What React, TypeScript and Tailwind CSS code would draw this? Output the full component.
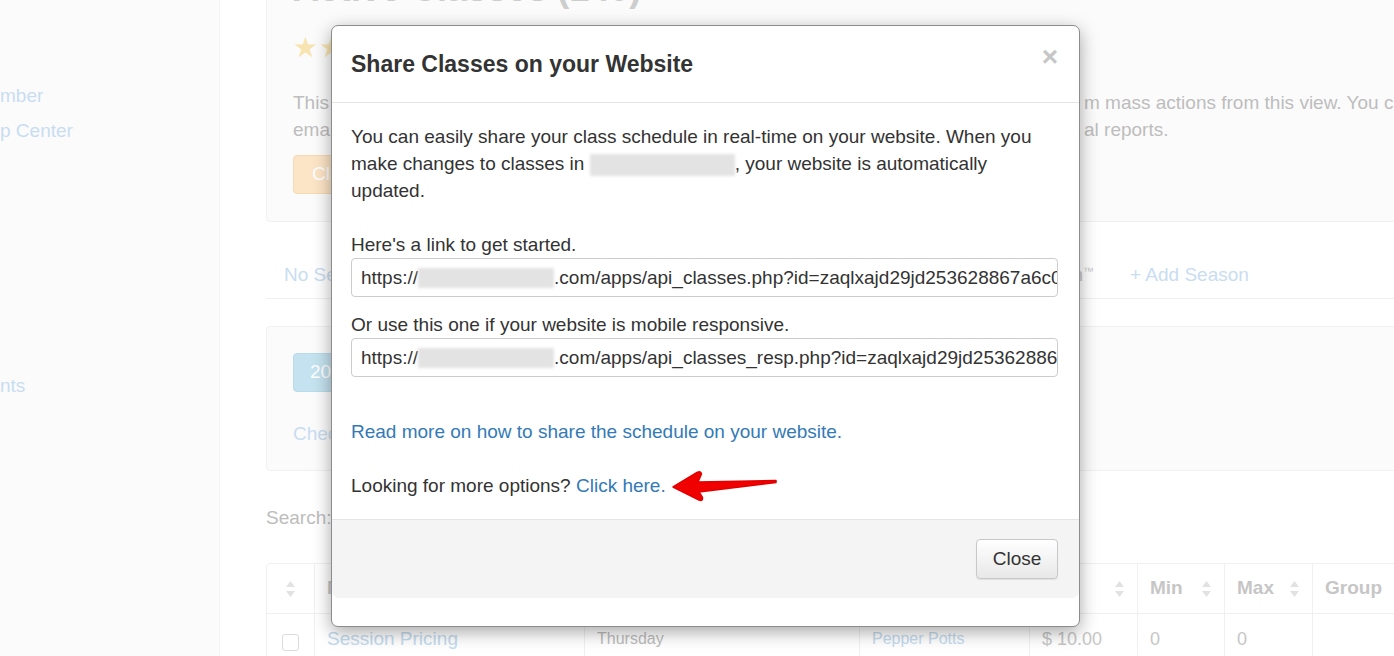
import React from "react";

const font = { fontFamily: '"Liberation Sans", Arial, sans-serif' };

function SortIcon() {
  return (
    <svg width="11" height="18" viewBox="0 0 11 18" className="shrink-0">
      <path d="M5.5 1 L10 7 L1 7 Z" fill="#e2e2e2" />
      <path d="M5.5 17 L10 11 L1 11 Z" fill="#e2e2e2" />
    </svg>
  );
}

function Blurred({ w, h }: { w: string; h: string }) {
  return <span className={`inline-block shrink-0 align-middle bg-[#e3e3e3] blur-[1.5px] ${w} ${h}`} />;
}

function Sidebar() {
  return (
    <div className="w-[220px] shrink-0 bg-[#fbfbfb] border-r border-[#f4f4f4] h-[656px] text-[19px] text-[#c9ddf1]">
      <div className="pt-[82px] leading-[27px]">mber</div>
      <div className="mt-[8px] leading-[27px]">p Center</div>
      <div className="mt-[228px] leading-[27px]">nts</div>
    </div>
  );
}

function TopPanel() {
  return (
    <div className="w-[1180px] -mt-[40px] bg-[#fbfbfb] border border-[#f1f1f1] rounded-[4px] pt-[8px] pb-[27px] px-[26px]">
      <h1 className="text-[36px] leading-[40px] font-bold text-[#cdcdcd]">Active Classes (140)</h1>
      <div className="mt-[24px] h-[30px] flex items-center gap-[1px] text-[28px] text-[#f8e4b0]">
        <span>★</span>
        <span>★</span>
        <span>★</span>
        <span>★</span>
        <span>★</span>
      </div>
      <div className="mt-[26px] text-[19px] leading-[27px] text-[#bdbdbd] whitespace-nowrap">
        <div className="flex">
          <span className="w-[791px] shrink-0 overflow-hidden">This page lists all of your active classes. You can edit, copy, and perfor</span>
          <span>m mass actions from this view. You can also</span>
        </div>
        <div className="flex">
          <span className="w-[791px] shrink-0 overflow-hidden">email your students, print your rosters and export class data into addition</span>
          <span>al reports.</span>
        </div>
      </div>
      <button className="mt-[12px] h-[39px] px-[18px] rounded-[4px] bg-[#fce4c6] border border-[#f7d9b3] text-white text-[19px]">
        Class Actions
      </button>
    </div>
  );
}

function Tabs() {
  return (
    <div className="mt-[30px] w-[1180px] h-[47px] border-b border-[#f0f0f0] flex items-center text-[19px] text-[#c9ddf1]">
      <span className="pl-[18px]">No Season</span>
      <div className="w-[716px] flex justify-end text-[#c8c8c8]">
        <span>
          Fall Session<sup className="text-[11px]">™</sup>
        </span>
      </div>
      <span className="ml-[36px]">+ Add Season</span>
    </div>
  );
}

function SecondPanel() {
  return (
    <div className="mt-[27px] w-[1180px] h-[145px] bg-[#fbfbfb] border border-[#f1f1f1] rounded-[4px] pt-[26px] px-[26px]">
      <button className="h-[39px] px-[16px] rounded-[4px] bg-[#c4e2ef] border border-[#b9dbea] text-white text-[19px]">
        2024 Classes
      </button>
      <div className="mt-[28px] text-[19px] leading-[27px] text-[#c9ddf1]">Check all classes</div>
    </div>
  );
}

function ClassTable() {
  const th = "h-[49px] border-r border-[#f0f0f0] flex items-center px-[12px] text-[19px] font-bold text-[#c6c6c6]";
  const td = "h-[50px] border-r border-[#f0f0f0] flex items-center px-[12px]";
  return (
    <div className="mt-[32px] w-[1180px] border border-[#f0f0f0] rounded-[4px]">
      <div className="flex border-b border-[#f0f0f0]">
        <div className={`${th} w-[48px] justify-center`}>
          <SortIcon />
        </div>
        <div className={`${th} w-[270px] justify-between`}>
          <span>Name</span>
          <SortIcon />
        </div>
        <div className={`${th} w-[275px] justify-between`}>
          <span>Day</span>
          <SortIcon />
        </div>
        <div className={`${th} w-[170px] justify-between`}>
          <span>Instructor</span>
          <SortIcon />
        </div>
        <div className={`${th} w-[108px] justify-between`}>
          <span>Fee</span>
          <SortIcon />
        </div>
        <div className={`${th} w-[87px] justify-between`}>
          <span>Min</span>
          <SortIcon />
        </div>
        <div className={`${th} w-[88px] justify-between`}>
          <span>Max</span>
          <SortIcon />
        </div>
        <div className={`${th} flex-1 border-r-0`}>
          <span>Group</span>
        </div>
      </div>
      <div className="flex">
        <div className={`${td} w-[48px] justify-center`}>
          <span className="w-[17px] h-[17px] mt-[6px] rounded-[3px] border border-[#dcdcdc] bg-white" />
        </div>
        <div className={`${td} w-[270px] text-[19px] text-[#c4dbef]`}>Session Pricing</div>
        <div className={`${td} w-[275px] text-[16px] text-[#bcbcbc]`}>Thursday</div>
        <div className={`${td} w-[170px] text-[16px] text-[#c4dbef]`}>Pepper Potts</div>
        <div className={`${td} w-[108px] text-[18px] text-[#c6c6c6]`}>$ 10.00</div>
        <div className={`${td} w-[87px] text-[18px] text-[#c6c6c6]`}>0</div>
        <div className={`${td} w-[88px] text-[18px] text-[#c6c6c6]`}>0</div>
        <div className={`${td} flex-1 border-r-0`} />
      </div>
    </div>
  );
}

function RedArrow() {
  return (
    <svg width="108" height="36" viewBox="0 0 108 36" className="ml-[5px] -my-[5px] shrink-0">
      <path
        d="M2 19 L26 4.5 Q30 2.5 30.5 6 L27 14 L105 12.5 L105 14.5 L28 24 L31.5 29.5 Q32 33.5 28 32 Z"
        fill="#f10000"
        stroke="#e20000"
        strokeWidth="1.5"
        strokeLinejoin="round"
      />
    </svg>
  );
}

function ShareModal() {
  return (
    <div className="absolute left-[331px] top-[25px] w-[749px] bg-white border border-[#8c8c8c] rounded-[7px] shadow-[0_5px_18px_rgba(0,0,0,0.35)] text-[#333]">
      <div className="relative h-[77px] px-[19px] flex items-center border-b border-[#e5e5e5]">
        <h2 className="text-[23px] font-bold leading-[30px]">Share Classes on your Website</h2>
        <span className="absolute right-[21px] top-[16px] text-[28px] font-bold leading-[30px] text-[#c6c6c6]">×</span>
      </div>
      <div className="pt-[20px] pb-[20px] pl-[19px] pr-[21px] text-[19px] leading-[27px]">
        <p>
          You can easily share your class schedule in real-time on your website. When you make changes to classes in{" "}
          <Blurred w="w-[145px]" h="h-[22px]" />, your website is automatically updated.
        </p>
        <p className="mt-[27px]">Here's a link to get started.</p>
        <div className="h-[39px] border border-[#cccccc] rounded-[4px] px-[9px] flex items-center whitespace-nowrap overflow-hidden">
          <span>https://</span>
          <Blurred w="w-[136px]" h="h-[20px]" />
          <span>.com/apps/api_classes.php?id=zaqlxajd29jd253628867a6c0d41f8e2</span>
        </div>
        <p className="mt-[14px]">Or use this one if your website is mobile responsive.</p>
        <div className="h-[39px] border border-[#cccccc] rounded-[4px] px-[9px] flex items-center whitespace-nowrap overflow-hidden">
          <span>https://</span>
          <Blurred w="w-[136px]" h="h-[20px]" />
          <span>.com/apps/api_classes_resp.php?id=zaqlxajd29jd253628867a6c0d41f8e2</span>
        </div>
        <p className="mt-[41px] text-[#337ab7]">Read more on how to share the schedule on your website.</p>
        <div className="mt-[27px] h-[27px] flex items-center">
          <span>
            Looking for more options? <span className="text-[#337ab7]">Click here.</span>
          </span>
          <RedArrow />
        </div>
      </div>
      <div className="h-[79px] bg-[#f4f4f4] border-t border-[#e5e5e5] rounded-b-[7px] px-[21px] flex items-center justify-end">
        <button className="w-[82px] h-[40px] rounded-[4px] border border-[#c8c8c8] bg-gradient-to-b from-white to-[#e8e8e8] shadow-[0_1px_1px_rgba(0,0,0,0.08)] text-[19px] text-[#333]">
          Close
        </button>
      </div>
      <div className="h-[28px]" />
    </div>
  );
}

export default function App() {
  return (
    <div className="relative w-[1394px] h-[656px] overflow-hidden bg-white" style={font}>
      <div className="flex">
        <Sidebar />
        <div className="pl-[46px] flex-1 overflow-hidden">
          <TopPanel />
          <Tabs />
          <SecondPanel />
          <div className="mt-[33px] text-[19px] leading-[27px] text-[#bdbdbd]">Search:</div>
          <ClassTable />
        </div>
      </div>
      <ShareModal />
    </div>
  );
}
